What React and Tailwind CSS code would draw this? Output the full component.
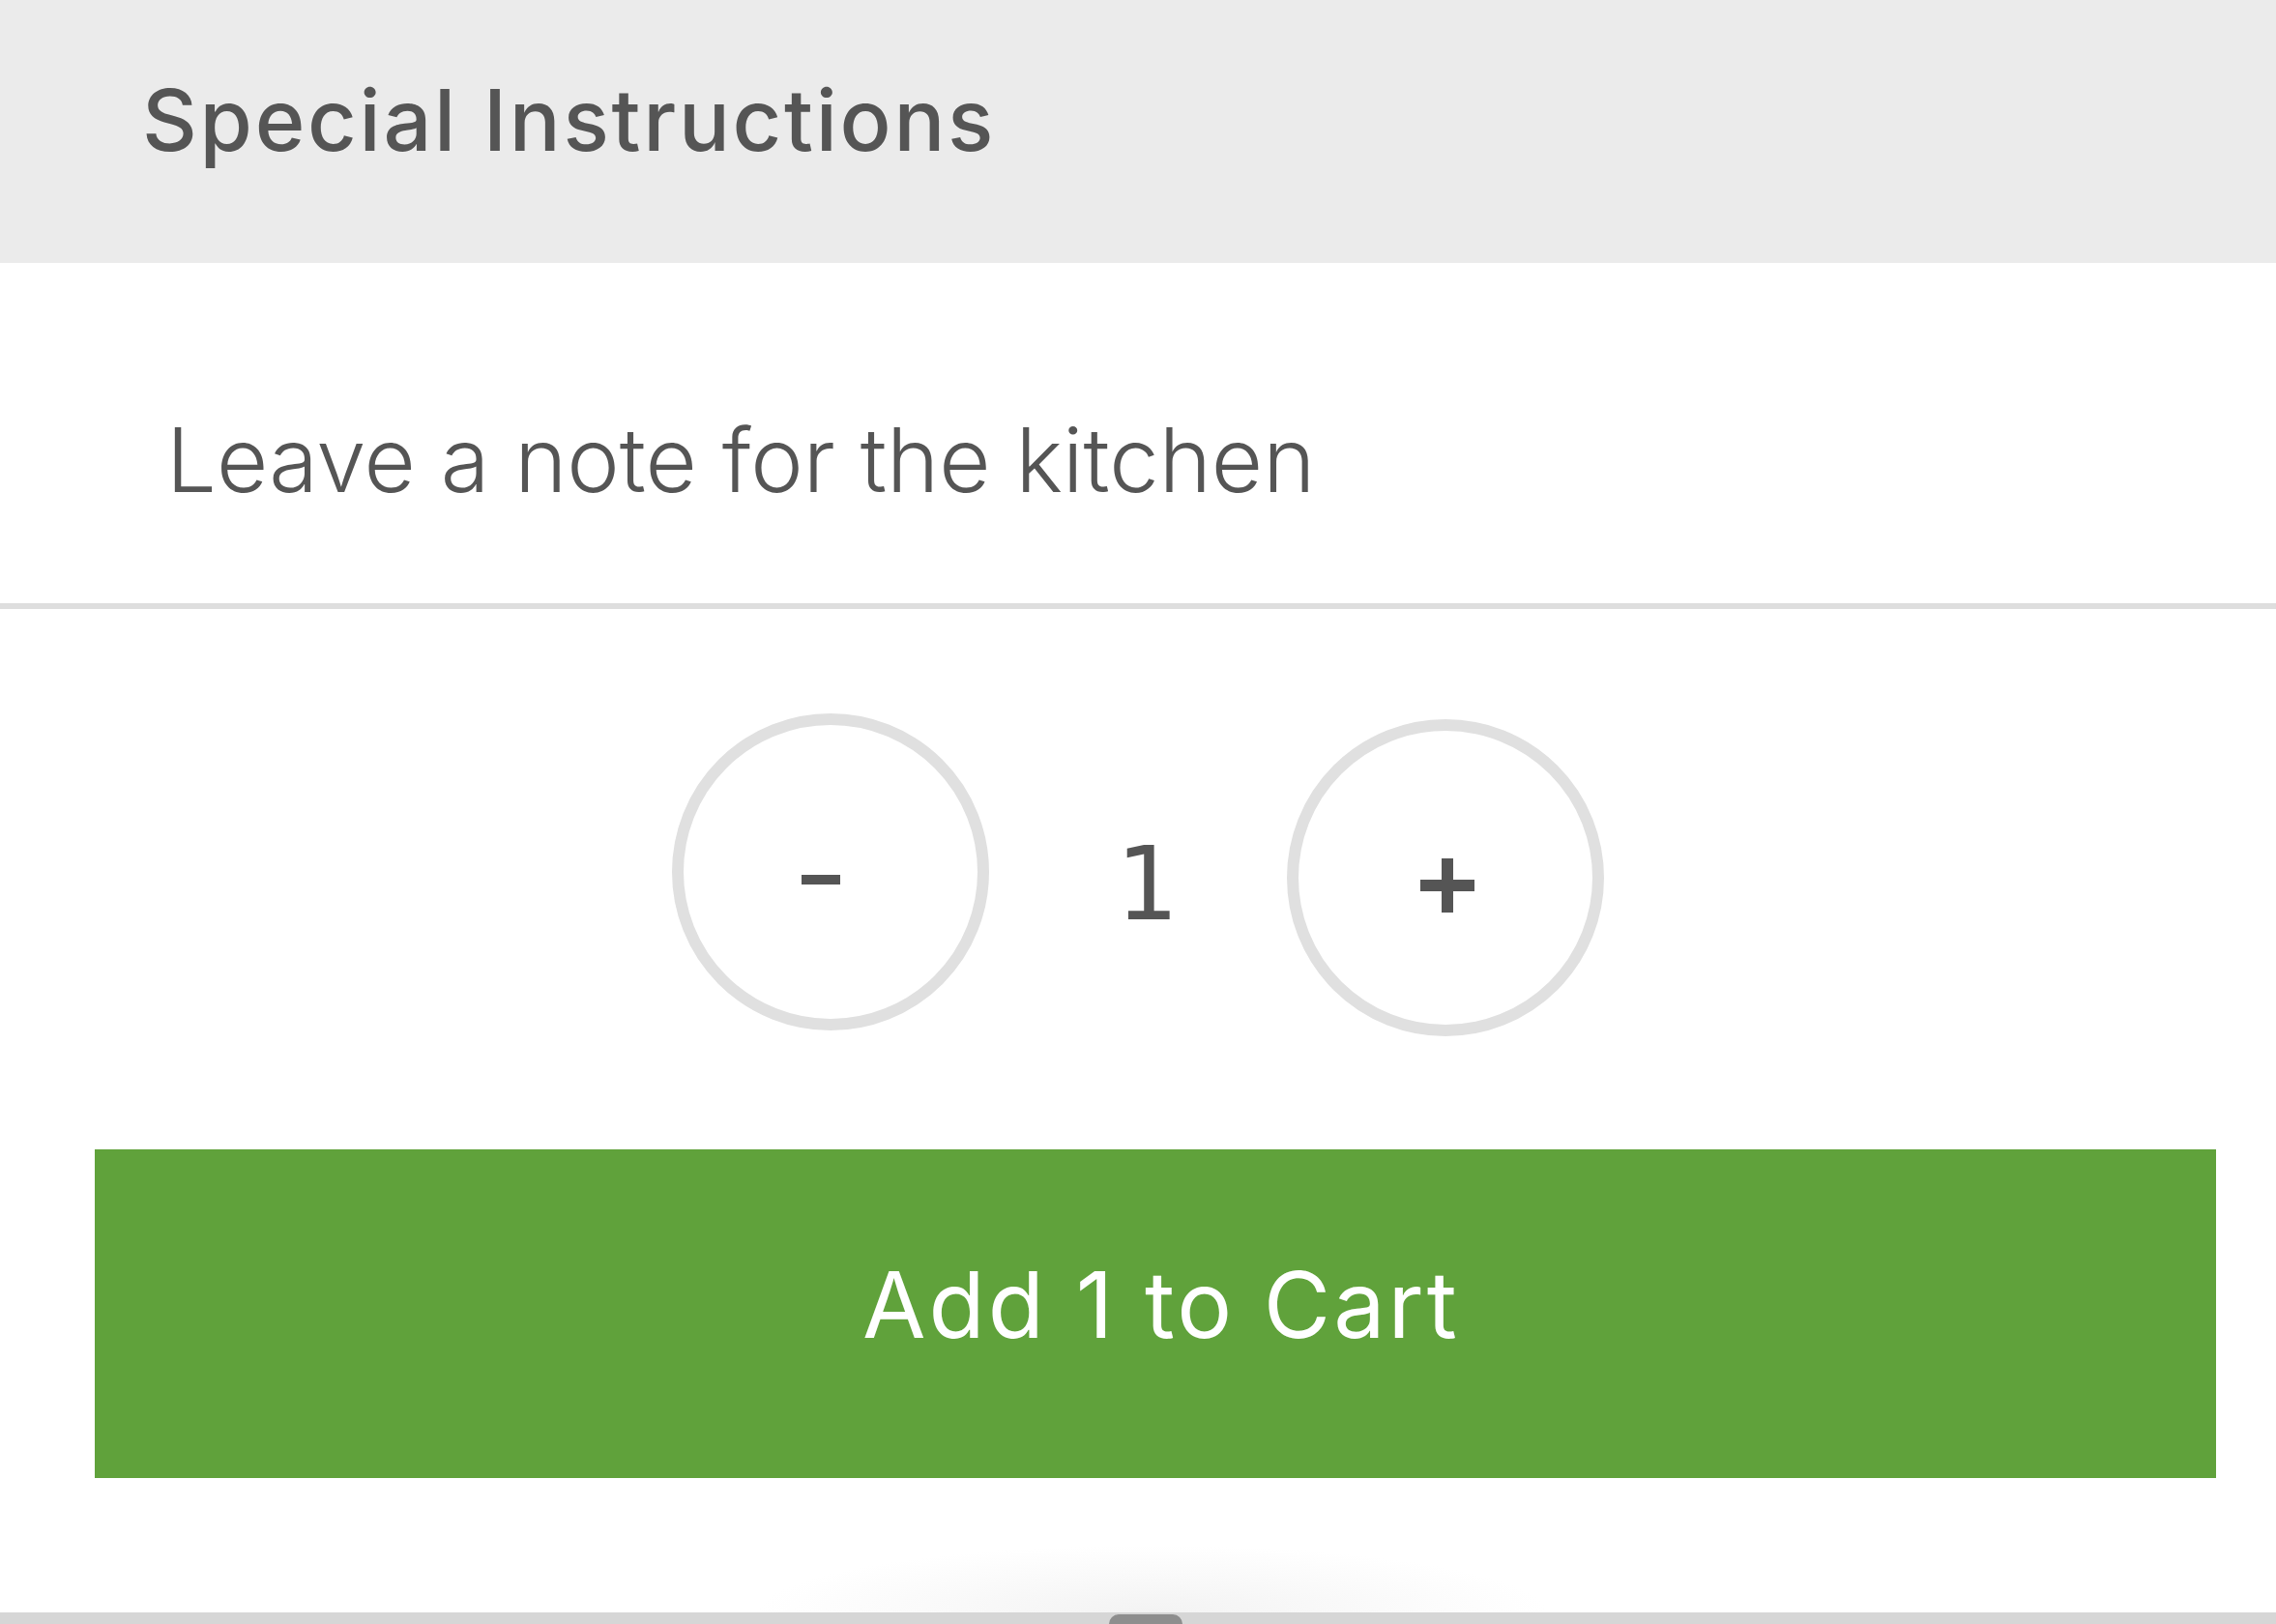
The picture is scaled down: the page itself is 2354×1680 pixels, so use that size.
import { useState } from "react";

const App = () => {
  const [qty, setQty] = useState(1);
  const [note, setNote] = useState("");

  return (
    <div className="w-[2354px] h-[1680px] bg-white flex flex-col overflow-hidden font-['Inter',sans-serif] text-[#555555]">
      {/* section header */}
      <div className="h-[272px] bg-[#ebebeb] pl-[147px] pt-[80px]">
        <h2 className="text-[88px] leading-none font-medium tracking-[2.7px]">Special Instructions</h2>
      </div>

      {/* note field */}
      <div className="h-[352px] pl-[172px] pt-[158px]">
        <div className="text-[92px] leading-none font-light">
          {note || "Leave a note for the kitchen"}
        </div>
      </div>
      <div className="h-[6px] bg-[#dedede]"></div>

      {/* quantity */}
      <div className="pt-[108px] flex items-start justify-center">
        <button
          aria-label="Decrease"
          onClick={() => setQty(Math.max(1, qty - 1))}
          className="w-[328px] h-[328px] rounded-full border-[12px] border-[#e0e0e0] flex items-center justify-center"
        >
          <svg width="40" height="10" viewBox="0 0 40 10" className="mr-[20px] mt-[16px]">
            <rect x="0" y="0" width="40" height="10" fill="#555555" />
          </svg>
        </button>
        <div className="w-[308px] h-[328px] pl-[16px] flex items-center justify-center">
          <span className="mt-[26px] text-[106px] leading-none font-['DejaVu_Sans_Mono',monospace]">{qty}</span>
        </div>
        <button
          aria-label="Increase"
          onClick={() => setQty(qty + 1)}
          className="mt-[6px] w-[328px] h-[328px] rounded-full border-[12px] border-[#e0e0e0] flex items-center justify-center"
        >
          <svg width="56" height="56" viewBox="0 0 56 56" className="ml-[4px] mt-[16px]">
            <rect x="0" y="22" width="56" height="12" fill="#555555" />
            <rect x="22" y="0" width="12" height="56" fill="#555555" />
          </svg>
        </button>
      </div>

      {/* add to cart */}
      <div className="pt-[117px] pl-[98px]">
        <button className="w-[2194px] h-[340px] pb-[19px] pl-[12px] bg-[#60a23b] text-white text-[95px] leading-none tracking-[3px] flex items-center justify-center">
          Add {qty} to Cart
        </button>
      </div>

      {/* bottom bar */}
      <div className="mt-auto relative h-[12px] bg-[#d6d6d6]">
        <div className="absolute left-[780px] right-[750px] bottom-[12px] h-[70px] bg-[radial-gradient(ellipse_at_bottom,#f3f3f3,transparent_70%)]"></div>
        <div className="absolute left-[1147px] top-[2px] w-[76px] h-[10px] rounded-t-full bg-[#8e8e8e]"></div>
      </div>
    </div>
  );
};

export default App;
